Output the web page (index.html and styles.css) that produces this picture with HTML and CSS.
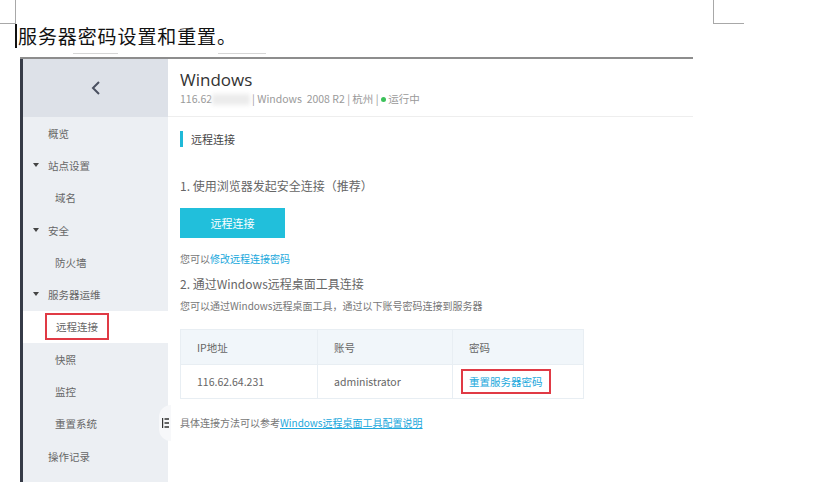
FILE: index.html
```html
<!DOCTYPE html>
<html lang="zh-CN">
<head>
    <meta charset="UTF-8">
    <meta name="viewport" content="width=device-width, initial-scale=1.0">
    <title>服务器密码设置和重置</title>
    <link rel="stylesheet" href="styles.css">
</head>
<body>
    <div class="page">
        <span class="mark mark-left"></span>
        <span class="mark mark-right"></span>

        <p class="doc-line"><span class="caret"></span>服务器密码设置和重置。</p>

        <div class="clip-marks">
            <span class="clip a"></span>
            <span class="clip b"></span>
        </div>

        <div class="shot">
            <aside class="sidebar">
                <div class="side-head">
                    <svg width="12" height="16" viewBox="0 0 12 16"><path d="M9 2 L3 8 L9 14" fill="none" stroke="#4a5060" stroke-width="2"/></svg>
                </div>
                <ul class="nav">
                    <li class="top">概览</li>
                    <li class="top group">站点设置</li>
                    <li class="sub">域名</li>
                    <li class="top group">安全</li>
                    <li class="sub">防火墙</li>
                    <li class="top group">服务器运维</li>
                    <li class="sub active"><span class="hl">远程连接</span></li>
                    <li class="sub">快照</li>
                    <li class="sub">监控</li>
                    <li class="sub">重置系统</li>
                    <li class="top">操作记录</li>
                </ul>
                <div class="fold">
                    <svg width="7" height="12" viewBox="0 0 7 12"><path d="M0.5 1 V11 M2.5 2 H7 M2.5 6 H7 M2.5 10 H7" stroke="#333" stroke-width="1.4" fill="none"/></svg>
                </div>
            </aside>

            <main class="main">
                <header class="main-head">
                    <h1>Windows</h1>
                    <div class="meta">116.62<span class="blur"></span>| Windows  2008 R2 | 杭州 | <span class="dot"></span> 运行中</div>
                </header>

                <section class="body">
                    <h2 class="sec-title">远程连接</h2>

                    <p class="step">1. 使用浏览器发起安全连接（推荐）</p>
                    <button class="btn">远程连接</button>
                    <p class="note">您可以<a href="#">修改远程连接密码</a></p>

                    <p class="step step2">2. 通过Windows远程桌面工具连接</p>
                    <p class="note">您可以通过Windows远程桌面工具，通过以下账号密码连接到服务器</p>

                    <table class="acct">
                        <thead>
                            <tr><th>IP地址</th><th>账号</th><th>密码</th></tr>
                        </thead>
                        <tbody>
                            <tr>
                                <td>116.62.64.231</td>
                                <td>administrator</td>
                                <td><a href="#" class="boxed">重置服务器密码</a></td>
                            </tr>
                        </tbody>
                    </table>

                    <p class="note tail">具体连接方法可以参考<a href="#" class="u">Windows远程桌面工具配置说明</a></p>
                </section>
            </main>
        </div>
    </div>
</body>
</html>
```

FILE: styles.css
```css
body {
    margin: 0;
    background-color: #ffffff;
    font-family: "Noto Sans CJK SC", "Open Sans", sans-serif;
    color: #666666;
}

.page {
    position: relative;
    width: 815px;
    height: 488px;
    overflow: hidden;
}

/* Word page corner marks */
.mark {
    position: absolute;
    top: 0;
    height: 23px;
    border-bottom: 1px solid #a8a8a8;
}

.mark-left {
    left: 0;
    width: 15px;
    border-right: 1px solid #a8a8a8;
}

.mark-right {
    left: 713px;
    width: 30px;
    border-left: 1px solid #a8a8a8;
}

.doc-line {
    margin: 0;
    padding: 23px 0 0 15px;
    height: 26px;
    display: flex;
    align-items: center;
    font-size: 19px;
    letter-spacing: 0.9px;
    line-height: 26px;
    color: #111111;
}

.caret {
    width: 2px;
    height: 24px;
    margin-right: 1px;
    background-color: #111111;
}

.clip-marks {
    height: 8px;
    display: flex;
    align-items: center;
}

.clip {
    height: 1px;
    background-color: #d6d6d6;
}

.clip.a {
    margin-left: 73px;
    width: 45px;
}

.clip.b {
    margin-left: 100px;
    width: 48px;
}

/* embedded screenshot */
.shot {
    margin-left: 20px;
    width: 673px;
    height: 423px;
    border-top: 2px solid #8d8d8d;
    display: flex;
}

.sidebar {
    position: relative;
    width: 145px;
    border-left: 3px solid #363b47;
    background-color: #eceff3;
}

.side-head {
    height: 58px;
    background-color: #dde1e8;
    display: flex;
    align-items: center;
    justify-content: center;
}

.nav {
    list-style: none;
    margin: 0;
    padding: 0;
    font-size: 10.5px;
    color: #666666;
}

.nav li {
    height: 32.3px;
    display: flex;
    align-items: center;
}

.nav .top {
    padding-left: 25px;
}

.nav .sub {
    padding-left: 32px;
}

.nav .group {
    position: relative;
}

.nav .group::before {
    content: "";
    position: absolute;
    left: 10px;
    top: 14px;
    border-left: 3px solid transparent;
    border-right: 3px solid transparent;
    border-top: 4px solid #444444;
}

.nav .active {
    background-color: #ffffff;
    padding-left: 22px;
}

.hl {
    padding: 4px 9px;
    border: 2px solid #e03a45;
}

.fold {
    position: absolute;
    right: -3px;
    top: 346px;
    width: 12px;
    height: 36px;
    border-radius: 12px 0 0 12px;
    background-color: #f7f8fa;
    display: flex;
    align-items: center;
    justify-content: center;
}

.main {
    flex: 1;
    background-color: #ffffff;
}

.main-head {
    height: 58px;
    padding-left: 12px;
    border-bottom: 1px solid #eeeeee;
    box-sizing: border-box;
}

.main-head h1 {
    margin: 0;
    padding-top: 9px;
    font-family: "Open Sans", sans-serif;
    font-weight: 400;
    font-size: 17px;
    line-height: 24px;
    color: #333333;
}

.meta {
    font-size: 10.5px;
    line-height: 14px;
    color: #9a9a9a;
    display: flex;
    align-items: center;
    white-space: pre;
}

.blur {
    display: inline-block;
    width: 38px;
    height: 11px;
    margin: 0 2px 0 0;
    background-color: #ececec;
    filter: blur(2px);
}

.dot {
    display: inline-block;
    width: 5px;
    height: 5px;
    border-radius: 50%;
    background-color: #3cc15a;
}

.body {
    padding: 14px 12px 0;
}

.sec-title {
    margin: 0;
    height: 16px;
    padding-left: 8px;
    border-left: 3px solid #1fb9d8;
    font-size: 11px;
    font-weight: 400;
    line-height: 16px;
    color: #444444;
}

.step {
    margin: 30px 0 0;
    font-size: 12px;
    line-height: 18px;
    color: #666666;
}

.step2 {
    margin-top: 8px;
}

.btn {
    margin-top: 13px;
    width: 105px;
    height: 30px;
    border: none;
    background-color: #21bfdb;
    color: #ffffff;
    font-family: inherit;
    font-size: 11px;
    cursor: pointer;
}

.note {
    margin: 0;
    font-size: 10px;
    line-height: 16px;
    color: #777777;
}

.btn + .note {
    margin-top: 13px;
}

.step2 + .note {
    margin-top: 5px;
}

a {
    color: #21a8dc;
    text-decoration: none;
}

a.u {
    text-decoration: underline;
}

.acct {
    margin-top: 15px;
    width: 404px;
    border-collapse: collapse;
    font-size: 10.5px;
    color: #666666;
}

.acct th,
.acct td {
    border: 1px solid #e8eef3;
    text-align: left;
    font-weight: 400;
    padding: 0 0 0 16px;
}

.acct th {
    height: 34px;
    background-color: #f1f6fa;
}

.acct td {
    height: 33px;
}

.acct th:nth-child(1) { width: 120px; }
.acct th:nth-child(2) { width: 118px; }

.acct td:last-child {
    padding-left: 8px;
}

.boxed {
    display: inline-block;
    padding: 3px 6px;
    border: 2px solid #e03a45;
}

.tail {
    margin-top: 16px;
}
```
